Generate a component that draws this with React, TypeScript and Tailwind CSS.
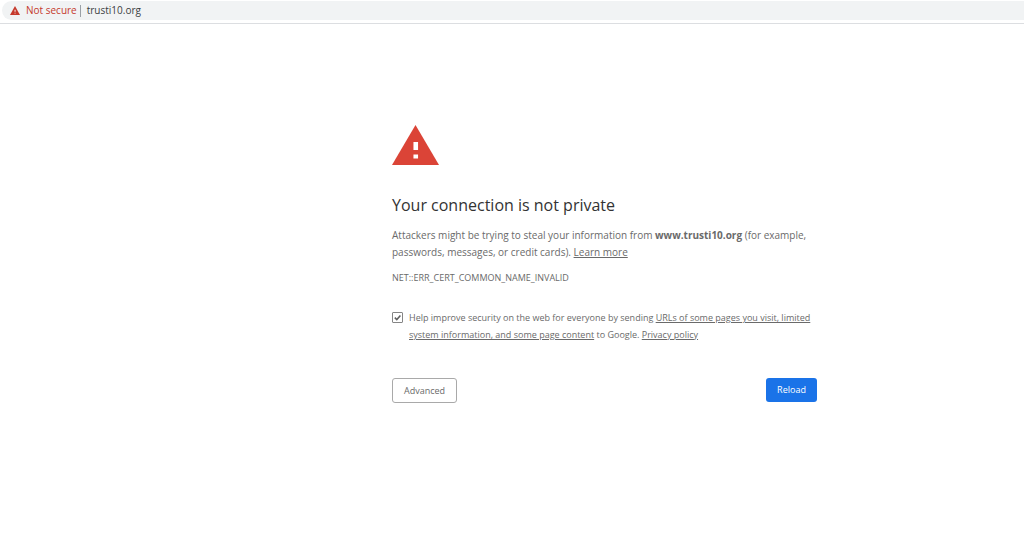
import { useState } from 'react';

/**
 * Warning triangle, shared by the address bar and the page body
 */
function WarningIcon({ className }: { className: string }) {
  return (
    <svg viewBox="0 0 46 40" className={className} fill="currentColor" preserveAspectRatio="none" aria-hidden="true">
      <path d="M23 0 46 40H0Z" />
      <path d="M21 17h4.5v8H21zM21 29.5h4.5v4H21z" fill="#fff" />
    </svg>
  );
}

function AddressBar() {
  return (
    <header className="border-b border-[#dcdee1] pt-px pb-[3px] pl-0.5">
      <div className="flex h-[19px] items-center rounded-l-full bg-[#f1f3f4] pl-2 text-[10px]">
        <WarningIcon className="h-[9px] w-[10px] text-[#c5392c]" />
        <span className="ml-1.5 text-[#c5392c]">Not secure</span>
        <span className="mr-1.5 ml-[3px] h-3 w-px bg-[#9aa0a6]" />
        <span className="text-[#3c4043]">trusti10.org</span>
      </div>
    </header>
  );
}

export default function App() {
  const [reporting, setReporting] = useState(true);

  return (
    <div className="min-h-screen bg-white font-['Open_Sans','Noto_Sans',sans-serif] text-[#6a6a6a]">
      <AddressBar />

      <div className="grid grid-cols-[392fr_minmax(0,425px)_207fr]">
        <main className="col-start-2 pt-[101px] pb-8">
          <WarningIcon className="h-10 w-[47px] text-[#db4437]" />
          <h1 className="mt-7 text-[16px] leading-6 text-[#333]">Your connection is not private</h1>
          <p className="mt-2.5 text-[10px] leading-[17px]">
            Attackers might be trying to steal your information from <strong>www.trusti10.org</strong> (for example,
            passwords, messages, or credit cards). <a href="#learn-more" className="underline">Learn more</a>
          </p>
          <p className="mt-2 text-[9px] leading-[17px]">NET::ERR_CERT_COMMON_NAME_INVALID</p>

          {/* Opt-in for extended reporting */}
          <div className="mt-[23px] flex gap-1.5 text-[9px] leading-[17px]">
            <span className="mt-[3px] grid size-[11px] shrink-0">
              <input
                id="reporting"
                type="checkbox"
                checked={reporting}
                onChange={e => setReporting(e.target.checked)}
                className="col-start-1 row-start-1 size-[11px] appearance-none rounded-[1px] border border-[#858585] bg-white"
              />
              {reporting && (
                <svg viewBox="0 0 11 11" className="pointer-events-none col-start-1 row-start-1 size-[11px]" aria-hidden="true">
                  <path d="M2.8 5.6 4.8 7.6 8.4 3.4" fill="none" stroke="#5f5f5f" strokeWidth="1.5" />
                </svg>
              )}
            </span>
            <label htmlFor="reporting">
              Help improve security on the web for everyone by sending{' '}
              <a href="#collected-data" className="underline">
                URLs of some pages you visit, limited system information, and some page content
              </a>{' '}
              to Google. <a href="#privacy" className="underline">Privacy policy</a>
            </label>
          </div>

          <div className="mt-[35px] flex items-start justify-between text-[9px]">
            <button type="button" className="h-[25px] w-[65px] rounded-[3px] border border-[#a9a9a9] bg-white">
              Advanced
            </button>
            <button type="button" className="h-6 w-[51px] rounded-[3px] bg-[#1a73e8] text-white">
              Reload
            </button>
          </div>
        </main>
      </div>
    </div>
  );
}
